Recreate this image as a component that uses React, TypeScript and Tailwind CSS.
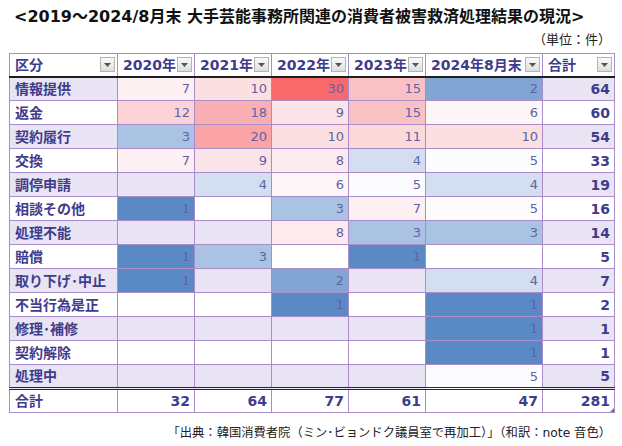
import React from "react";

type Row = { label: string; vals: (number | null)[]; total: number };

const rows: Row[] = [
  { label: "情報提供", vals: [7, 10, 30, 15, 2], total: 64 },
  { label: "返金", vals: [12, 18, 9, 15, 6], total: 60 },
  { label: "契約履行", vals: [3, 20, 10, 11, 10], total: 54 },
  { label: "交換", vals: [7, 9, 8, 4, 5], total: 33 },
  { label: "調停申請", vals: [null, 4, 6, 5, 4], total: 19 },
  { label: "相談その他", vals: [1, null, 3, 7, 5], total: 16 },
  { label: "処理不能", vals: [null, null, 8, 3, 3], total: 14 },
  { label: "賠償", vals: [1, 3, null, 1, null], total: 5 },
  { label: "取り下げ･中止", vals: [1, null, 2, null, 4], total: 7 },
  { label: "不当行為是正", vals: [null, null, 1, null, 1], total: 2 },
  { label: "修理･補修", vals: [null, null, null, null, 1], total: 1 },
  { label: "契約解除", vals: [null, null, null, null, 1], total: 1 },
  { label: "処理中", vals: [null, null, null, null, 5], total: 5 },
];

const totals = [32, 64, 77, 61, 47];

const heat: Record<number, string> = {
  1: "bg-[#5a8ac6]",
  2: "bg-[#82a6d4]",
  3: "bg-[#abc3e2]",
  4: "bg-[#d3dff0]",
  5: "bg-[#fcfcff]",
  6: "bg-[#fcf6f9]",
  7: "bg-[#fcf0f3]",
  8: "bg-[#fceaed]",
  9: "bg-[#fbe4e7]",
  10: "bg-[#fbdfe1]",
  11: "bg-[#fbd9db]",
  12: "bg-[#fbd3d6]",
  15: "bg-[#fac1c4]",
  18: "bg-[#fab0b2]",
  20: "bg-[#faa4a6]",
  30: "bg-[#f8696b]",
};

const headers = ["区分", "2020年", "2021年", "2022年", "2023年", "2024年8月末", "合計"];

function DropBtn() {
  return (
    <div className="w-[15px] h-[15px] shrink-0 mr-[2px] border border-[#b4b4b4] bg-gradient-to-b from-[#fafafa] to-[#dedede] flex items-center justify-center">
      <svg width="7" height="4" viewBox="0 0 7 4">
        <polygon points="0,0 7,0 3.5,4" fill="#555" />
      </svg>
    </div>
  );
}

export default function App() {
  return (
    <div className="w-[622px] h-[446px] bg-white font-['DejaVu_Sans','Noto_Sans_CJK_JP',sans-serif] overflow-hidden">
      <div className="h-[34px] flex items-center pl-[14px] text-[16px] font-bold text-[#111] whitespace-nowrap">
        &lt;2019～2024/8月末 大手芸能事務所関連の消費者被害救済処理結果の現況&gt;
      </div>
      <div className="h-[12px] flex items-center justify-end pr-[11px] text-[13px] text-[#222] whitespace-nowrap">
        （単位：件）
      </div>
      <div className="mt-[7px] ml-[9px]">
        <table className="border-collapse table-fixed w-[605px]">
          <colgroup>
            <col className="w-[108px]" />
            <col className="w-[77px]" />
            <col className="w-[77px]" />
            <col className="w-[77px]" />
            <col className="w-[77px]" />
            <col className="w-[117px]" />
            <col className="w-[72px]" />
          </colgroup>
          <thead>
            <tr>
              {headers.map((h) => (
                <th
                  key={h}
                  className="h-[23px] p-0 border border-[#a98dca] border-b-2 border-b-[#1e1e1e] bg-white text-left align-middle"
                >
                  <div className="flex items-center justify-between pl-[5px] text-[14px] font-bold text-[#3f3c8c] leading-none whitespace-nowrap">
                    <span>{h}</span>
                    <DropBtn />
                  </div>
                </th>
              ))}
            </tr>
          </thead>
          <tbody>
            {rows.map((r, i) => {
              const rowBg = i % 2 === 0 ? "bg-[#e8e4f3]" : "bg-white";
              return (
                <tr key={r.label}>
                  <td className={`h-[24px] p-0 pl-[5px] border border-[#a98dca] ${rowBg} text-[14px] font-bold text-[#3f3c8c] leading-none whitespace-nowrap`}>
                    {r.label}
                  </td>
                  {r.vals.map((v, j) => (
                    <td
                      key={j}
                      className={`h-[24px] p-0 pr-[4px] border border-[#a98dca] ${v === null ? rowBg : heat[v]} text-right text-[13px] text-[#6262a6] leading-none`}
                    >
                      {v === null ? "" : v}
                    </td>
                  ))}
                  <td className={`h-[24px] p-0 pr-[4px] border border-[#a98dca] ${rowBg} text-right text-[14px] font-bold text-[#3f3c8c] leading-none`}>
                    {r.total}
                  </td>
                </tr>
              );
            })}
            <tr>
              <td className="h-[24px] p-0 pl-[5px] border border-[#a98dca] border-t-[3px] border-t-[#2a2a2a] border-double bg-white text-[14px] font-bold text-[#3f3c8c] leading-none">
                合計
              </td>
              {totals.map((t, j) => (
                <td
                  key={j}
                  className="h-[24px] p-0 pr-[4px] border border-[#a98dca] border-t-[3px] border-t-[#2a2a2a] border-double bg-white text-right text-[14px] font-bold text-[#3f3c8c] leading-none"
                >
                  {t}
                </td>
              ))}
              <td className="relative h-[24px] p-0 pr-[4px] border border-[#a98dca] border-t-[3px] border-t-[#2a2a2a] border-double bg-white text-right text-[14px] font-bold text-[#3f3c8c] leading-none">
                281
                <svg className="absolute right-0 bottom-0" width="4" height="4" viewBox="0 0 4 4">
                  <polygon points="4,0 4,4 0,4" fill="#4a78c0" />
                </svg>
              </td>
            </tr>
          </tbody>
        </table>
      </div>
      <div className="mt-[8px] h-[24px] flex items-center justify-end pr-[11px] text-[12.3px] text-[#222] whitespace-nowrap">
        「出典：韓国消費者院（ミン･ビョンドク議員室で再加工）」（和訳：note 音色）
      </div>
    </div>
  );
}
